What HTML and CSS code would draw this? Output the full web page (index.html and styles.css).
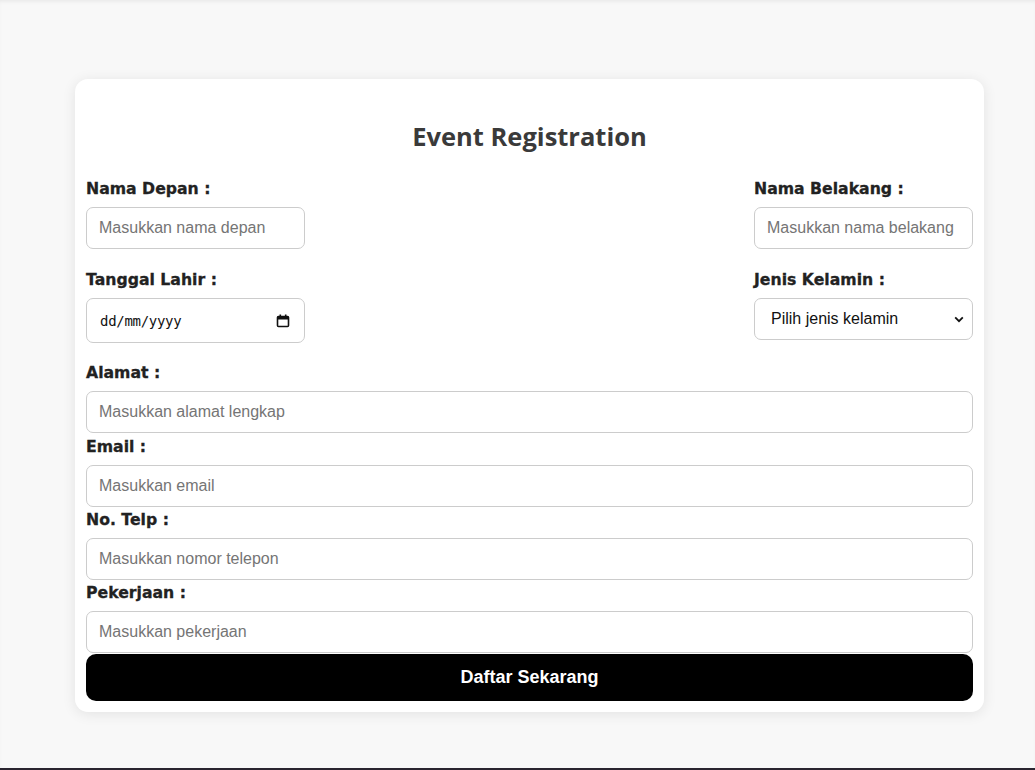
FILE: index.html
```html
<!DOCTYPE html>
<html lang="id">
<head>
<meta charset="utf-8">
<title>Event Registration</title>
<link rel="stylesheet" href="styles.css">
</head>
<body>
<div class="page">
  <form class="card">
    <h2 class="title">Event Registration</h2>
    <div class="row">
      <div class="field half">
        <label class="label">Nama Depan :</label>
        <input class="input" type="text" placeholder="Masukkan nama depan">
      </div>
      <div class="field half">
        <label class="label">Nama Belakang :</label>
        <input class="input" type="text" placeholder="Masukkan nama belakang">
      </div>
    </div>
    <div class="row row2">
      <div class="field half">
        <label class="label">Tanggal Lahir :</label>
        <div class="input date">
          <span class="date-text">dd/mm/yyyy</span>
          <svg class="cal" width="14" height="14" viewBox="0 0 14 14"><rect x="1.5" y="2.5" width="11" height="10" rx="1" fill="none" stroke="#111" stroke-width="1.6"/><rect x="1.5" y="2.5" width="11" height="3" fill="#111"/><rect x="3.5" y="0.5" width="1.6" height="3" fill="#111"/><rect x="8.9" y="0.5" width="1.6" height="3" fill="#111"/></svg>
        </div>
      </div>
      <div class="field half">
        <label class="label">Jenis Kelamin :</label>
        <div class="input select">
          <span>Pilih jenis kelamin</span>
          <svg width="10" height="7" viewBox="0 0 10 7"><path d="M1.2 1.4 L5 5.2 L8.8 1.4" fill="none" stroke="#111" stroke-width="1.8"/></svg>
        </div>
      </div>
    </div>
    <div class="field full first">
      <label class="label">Alamat :</label>
      <input class="input" type="text" placeholder="Masukkan alamat lengkap">
    </div>
    <div class="field full">
      <label class="label">Email :</label>
      <input class="input" type="text" placeholder="Masukkan email">
    </div>
    <div class="field full">
      <label class="label">No. Telp :</label>
      <input class="input" type="text" placeholder="Masukkan nomor telepon">
    </div>
    <div class="field full last">
      <label class="label">Pekerjaan :</label>
      <input class="input" type="text" placeholder="Masukkan pekerjaan">
    </div>
    <button class="btn" type="button">Daftar Sekarang</button>
  </form>
</div>
<div class="bottom-bar"></div>
</body>
</html>
```
FILE: styles.css
```css
html, body {
  margin: 0;
  padding: 0;
}
body {
  background: #f8f8f8;
  font-family: "Liberation Sans", Arial, sans-serif;
  height: 770px;
  overflow: hidden;
  position: relative;
  box-shadow: inset 0 3px 4px -2px rgba(0,0,0,0.08);
}
.page {
  padding-top: 79px;
  padding-left: 75px;
}
.card {
  width: 909px;
  box-sizing: border-box;
  background: #fff;
  border-radius: 13px;
  box-shadow: 0 2px 14px rgba(0,0,0,0.09);
  padding: 40px 11px 11px 11px;
  display: flex;
  flex-direction: column;
}
.title {
  margin: 0 0 25px;
  text-align: center;
  font-family: "Open Sans", "Noto Sans", sans-serif;
  font-weight: 700;
  font-size: 25.5px;
  line-height: 34px;
  color: #3a3a3a;
}
.row {
  display: flex;
  justify-content: space-between;
  align-items: flex-start;
  margin-bottom: 20px;
}
.row2 {
  margin-bottom: 19px;
}
.field {
  display: flex;
  flex-direction: column;
}
.half {
  width: 219px;
}
.full {
  margin-bottom: 2px;
}
.full.first {
  margin-bottom: 3px;
}
.full.last {
  margin-bottom: 1px;
}
.label {
  font-family: "DejaVu Sans", "Lato", sans-serif;
  font-weight: 700;
  font-size: 15.7px;
  line-height: 22px;
  color: #222;
  -webkit-text-stroke: 0.3px #222;
  margin-bottom: 7px;
  white-space: nowrap;
}
.input {
  box-sizing: border-box;
  height: 42px;
  width: 100%;
  border: 1px solid #ccc;
  border-radius: 7px;
  padding: 0 12px;
  font-family: "Liberation Sans", Arial, sans-serif;
  font-size: 16px;
  color: #111;
  background: #fff;
  outline: none;
  margin: 0;
}
.input::placeholder {
  color: #757575;
}
.date {
  height: 45px;
  display: flex;
  align-items: center;
  justify-content: space-between;
  padding: 0 14px 0 13px;
}
.date-text {
  font-family: "DejaVu Sans Mono", "Liberation Mono", monospace;
  font-size: 14px;
  letter-spacing: -0.3px;
  color: #111;
}
.select {
  display: flex;
  align-items: center;
  justify-content: space-between;
  padding: 0 8px 0 16px;
  color: #111;
}
.btn {
  height: 47px;
  flex: 0 0 47px;
  width: 100%;
  border: none;
  border-radius: 10px;
  background: #000;
  color: #fff;
  font-family: "Liberation Sans", Arial, sans-serif;
  font-weight: 700;
  font-size: 18px;
  cursor: pointer;
  margin: 0;
}
.bottom-bar {
  position: absolute;
  left: 0;
  right: 0;
  bottom: 0;
  height: 2px;
  background: #2a2530;
}
```
